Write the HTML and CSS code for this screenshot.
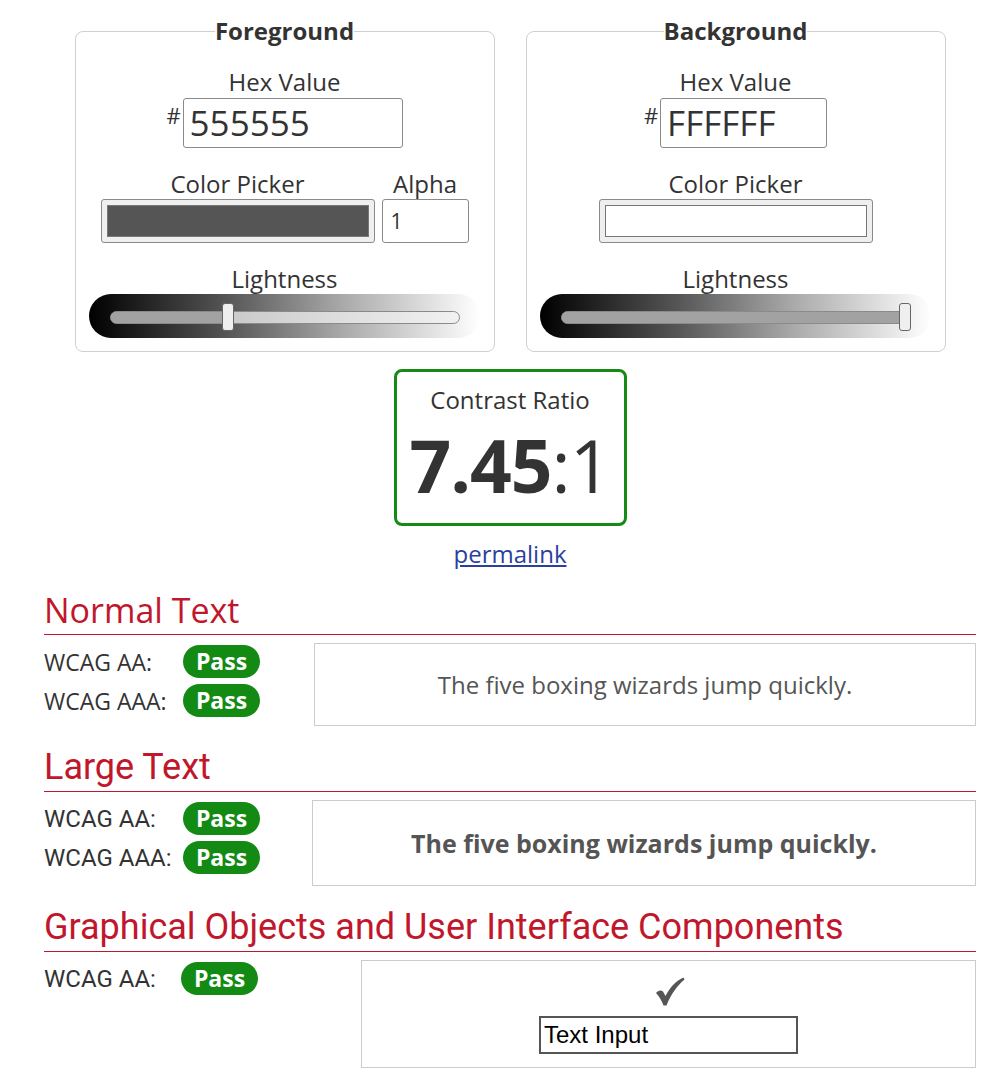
FILE: index.html
```html
<!DOCTYPE html>
<html>
<head>
<meta charset="utf-8">
<link rel="stylesheet" href="styles.css">
</head>
<body>
<div class="page">
  <div class="pickers">
    <fieldset class="panel">
      <legend>Foreground</legend>
      <div class="label">Hex Value</div>
      <div class="hex-row">
        <span class="hash">#</span>
        <div class="hex-input fg-hex">555555</div>
      </div>
      <div class="picker-row">
        <div class="col">
          <div class="label label-tight">Color Picker</div>
          <div class="swatch"><div class="swatch-fill fg-fill"></div></div>
        </div>
        <div class="col">
          <div class="label label-tight">Alpha</div>
          <div class="alpha-input">1</div>
        </div>
      </div>
      <div class="label label-gap">Lightness</div>
      <div class="slider">
        <div class="track">
          <div class="track-fill fg-track"></div>
          <div class="thumb fg-thumb"></div>
        </div>
      </div>
    </fieldset>
    <fieldset class="panel">
      <legend>Background</legend>
      <div class="label">Hex Value</div>
      <div class="hex-row">
        <span class="hash">#</span>
        <div class="hex-input bg-hex">FFFFFF</div>
      </div>
      <div class="picker-row">
        <div class="col">
          <div class="label label-tight">Color Picker</div>
          <div class="swatch"><div class="swatch-fill bg-fill"></div></div>
        </div>
      </div>
      <div class="label label-gap">Lightness</div>
      <div class="slider">
        <div class="track">
          <div class="track-fill bg-track"></div>
          <div class="thumb bg-thumb"></div>
        </div>
      </div>
    </fieldset>
  </div>

  <div class="ratio-box">
    <div class="ratio-title">Contrast Ratio</div>
    <div class="ratio"><b>7.45</b>:1</div>
  </div>
  <div class="permalink"><a href="#">permalink</a></div>

  <h2 class="heading heading-normal">Normal Text</h2>
  <div class="result">
    <div class="levels levels-1">
      <div class="level"><span class="lvl-label">WCAG AA:</span><span class="pass">Pass</span></div>
      <div class="level"><span class="lvl-label">WCAG AAA:</span><span class="pass">Pass</span></div>
    </div>
    <div class="sample sample-normal">The five boxing wizards jump quickly.</div>
  </div>

  <h2 class="heading heading-alt">Large Text</h2>
  <div class="result">
    <div class="levels levels-2">
      <div class="level"><span class="lvl-label alt">WCAG AA:</span><span class="pass alt-pass">Pass</span></div>
      <div class="level"><span class="lvl-label alt">WCAG AAA:</span><span class="pass alt-pass">Pass</span></div>
    </div>
    <div class="sample sample-large">The five boxing wizards jump quickly.</div>
  </div>

  <h2 class="heading heading-alt">Graphical Objects and User Interface Components</h2>
  <div class="result">
    <div class="levels levels-3">
      <div class="level"><span class="lvl-label alt">WCAG AA:</span><span class="pass alt-pass">Pass</span></div>
    </div>
    <div class="sample sample-ui">
      <svg class="check" width="29" height="29" viewBox="0 0 29 29" aria-label="check">
        <path d="M0,16 C2,13.5 5,12.5 7,14.5 L9.5,19 C13.5,11 19.5,4 27.5,0.5 L28.5,2.5 C21.5,8.5 15,17 10.5,28.5 L7.5,28.5 C5.5,23.5 3,19 0,16 Z" fill="#555"/>
      </svg>
      <div class="text-input">Text Input</div>
    </div>
  </div>
</div>
</body>
</html>
```

FILE: styles.css
```css
* { box-sizing: border-box; }
body {
  margin: 0;
  background: #fff;
  color: #333;
  font-family: "Open Sans", "DejaVu Sans", sans-serif;
}
.page {
  width: 932px;
  margin-left: 44px;
  padding-bottom: 10px;
}
.pickers {
  display: flex;
  justify-content: center;
  gap: 31px;
  margin-top: 16px;
}
.panel {
  width: 420px;
  margin: 0;
  padding: 0 0 13px;
  border: 1px solid #cfcfcf;
  border-radius: 8px;
  text-align: center;
  min-inline-size: 0;
}
.panel legend {
  margin: 0 auto;
  padding: 0;
  font-weight: 700;
  font-size: 24px;
  line-height: 30px;
  color: #333;
}
.label {
  font-size: 24px;
  line-height: 30px;
  margin-top: 21px;
  color: #333;
}
.label-tight { margin-top: 0; }
.label-gap { margin-top: 21px; }
.hex-row {
  display: flex;
  justify-content: center;
  align-items: flex-start;
  margin-top: 1px;
  gap: 2px;
}
.hash {
  font-size: 22px;
  line-height: 22px;
  margin-top: 6px;
  color: #333;
}
.hex-input {
  height: 50px;
  border: 1px solid #8a8a8a;
  border-radius: 3px;
  font-size: 35px;
  line-height: 48px;
  padding-left: 6px;
  text-align: left;
  color: #333;
}
.fg-hex { width: 220px; }
.bg-hex { width: 167px; }
.picker-row {
  display: flex;
  justify-content: center;
  gap: 7px;
  margin-top: 21px;
}
.col { display: flex; flex-direction: column; align-items: center; }
.swatch {
  width: 274px;
  height: 44px;
  border: 1px solid #8a8a8a;
  border-radius: 3px;
  background: #efefef;
  padding: 5px;
}
.swatch-fill {
  width: 100%;
  height: 100%;
  border: 1px solid #777;
}
.fg-fill { background: #555555; }
.bg-fill { background: #ffffff; }
.alpha-input {
  width: 87px;
  height: 44px;
  border: 1px solid #8a8a8a;
  border-radius: 3px;
  font-size: 21px;
  line-height: 42px;
  text-align: left;
  padding-left: 8px;
  color: #333;
}
.slider {
  width: 391px;
  height: 44px;
  margin-left: 13px;
  border-radius: 22px;
  background: linear-gradient(to right, #000 0%, #555 35%, #aaa 65%, #fff 100%);
  padding: 17px 20px 0 21px;
}
.track {
  position: relative;
  height: 13px;
  border: 1px solid #8a8a8a;
  border-radius: 7px;
  background: rgba(240, 240, 240, 0.75);
}
.track-fill {
  position: absolute;
  left: 0;
  top: 0;
  bottom: 0;
  border-radius: 7px 0 0 7px;
  background: #a2a2a2;
}
.fg-track { width: 115px; }
.bg-track { width: 340px; }
.thumb {
  position: absolute;
  top: -9px;
  width: 12px;
  height: 28px;
  border: 1px solid #666;
  border-radius: 3px;
  background: #efefef;
}
.fg-thumb { left: 111px; }
.bg-thumb { left: 337px; }
.ratio-box {
  width: 233px;
  height: 157px;
  margin: 17px auto 0;
  border: 3px solid #158a15;
  border-radius: 8px;
  text-align: center;
  padding-top: 13px;
}
.ratio-title {
  font-size: 24px;
  line-height: 30px;
  color: #333;
}
.ratio {
  font-size: 73px;
  line-height: 80px;
  margin-top: 10px;
  color: #333;
  letter-spacing: -1px;
}
.ratio b { font-weight: 700; }
.permalink {
  text-align: center;
  font-size: 24px;
  line-height: 30px;
  margin-top: 13px;
}
.permalink a { color: #2b3f9e; }
.heading {
  margin: 21px 0 0;
  font-weight: 400;
  color: #c1172c;
  line-height: 40px;
  padding-bottom: 4px;
  border-bottom: 1px solid #c1172c;
}
.heading-normal {
  font-family: "Open Sans", sans-serif;
  font-size: 34px;
}
.heading-alt {
  font-family: Roboto, "Open Sans", sans-serif;
  font-size: 36px;
  margin-top: 21px;
}
.result {
  display: flex;
  margin-top: 8px;
}
.levels { flex: none; padding-top: 2px; }
.levels-1 { width: 270px; }
.levels-2 { width: 268px; }
.levels-3 { width: 317px; }
.level {
  display: flex;
  align-items: center;
  height: 33px;
  margin-bottom: 6px;
}
.lvl-label {
  font-size: 23px;
  width: 139px;
  color: #333;
}
.lvl-label.alt {
  font-family: Roboto, sans-serif;
  font-size: 24px;
}
.levels-3 .lvl-label { width: 137px; }
.pass {
  width: 77px;
  height: 33px;
  border-radius: 17px;
  background: #138a13;
  color: #fff;
  font-weight: 700;
  font-size: 23px;
  line-height: 33px;
  text-align: center;
}
.sample {
  flex: 1;
  border: 1px solid #cccccc;
  display: flex;
  align-items: center;
  justify-content: center;
  color: #555;
}
.sample-normal {
  height: 83px;
  font-size: 24px;
}
.sample-large {
  height: 86px;
  font-size: 25px;
  font-weight: 700;
}
.sample-ui {
  height: 108px;
  flex-direction: column;
  justify-content: flex-start;
  padding-top: 16px;
}
.check {
  display: block;
  margin-left: 4px;
}
.text-input {
  width: 259px;
  height: 38px;
  margin-top: 10px;
  border: 2px solid #555;
  font-family: "Liberation Sans", Arial, sans-serif;
  font-size: 24px;
  line-height: 34px;
  padding-left: 3px;
  color: #000;
}
```
